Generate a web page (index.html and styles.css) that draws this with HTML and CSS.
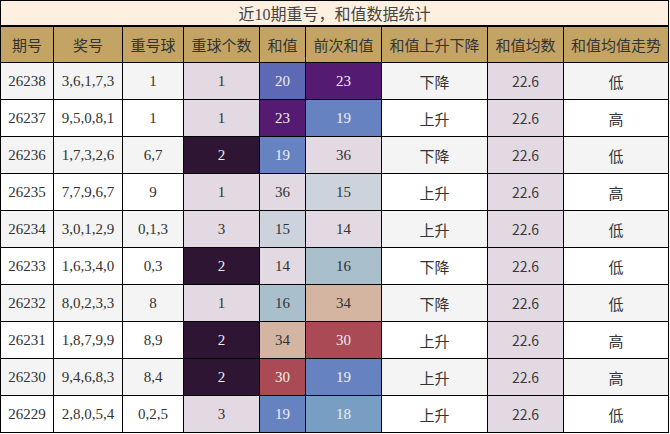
FILE: index.html
```html
<!DOCTYPE html>
<html lang="zh">
<head>
<meta charset="utf-8">
<title>近10期重号，和值数据统计</title>
<link rel="stylesheet" href="styles.css">
</head>
<body>
<table class="stats">
  <colgroup>
    <col class="c1"><col class="c2"><col class="c3"><col class="c4"><col class="c5">
    <col class="c6"><col class="c7"><col class="c8"><col class="c9">
  </colgroup>
  <thead>
    <tr class="title-row"><th colspan="9" class="title">近10期重号，和值数据统计</th></tr>
    <tr class="head-row">
      <th>期号</th><th>奖号</th><th>重号球</th><th>重球个数</th><th>和值</th>
      <th>前次和值</th><th>和值上升下降</th><th>和值均数</th><th>和值均值走势</th>
    </tr>
  </thead>
  <tbody>
    <tr class="alt"><td>26238</td><td>3,6,1,7,3</td><td>1</td><td class="cnt">1</td><td class="s20">20</td><td class="s23">23</td><td class="cn">下降</td><td class="avg cn">22.6</td><td class="cn">低</td></tr>
    <tr><td>26237</td><td>9,5,0,8,1</td><td>1</td><td class="cnt">1</td><td class="s23">23</td><td class="s19">19</td><td class="cn">上升</td><td class="avg cn">22.6</td><td class="cn">高</td></tr>
    <tr class="alt"><td>26236</td><td>1,7,3,2,6</td><td>6,7</td><td class="cnt2">2</td><td class="s19">19</td><td class="s36">36</td><td class="cn">下降</td><td class="avg cn">22.6</td><td class="cn">低</td></tr>
    <tr><td>26235</td><td>7,7,9,6,7</td><td>9</td><td class="cnt">1</td><td class="s36">36</td><td class="s15">15</td><td class="cn">上升</td><td class="avg cn">22.6</td><td class="cn">高</td></tr>
    <tr class="alt"><td>26234</td><td>3,0,1,2,9</td><td>0,1,3</td><td class="cnt">3</td><td class="s15">15</td><td class="s14">14</td><td class="cn">上升</td><td class="avg cn">22.6</td><td class="cn">低</td></tr>
    <tr><td>26233</td><td>1,6,3,4,0</td><td>0,3</td><td class="cnt2">2</td><td class="s14">14</td><td class="s16">16</td><td class="cn">下降</td><td class="avg cn">22.6</td><td class="cn">低</td></tr>
    <tr class="alt"><td>26232</td><td>8,0,2,3,3</td><td>8</td><td class="cnt">1</td><td class="s16">16</td><td class="s34">34</td><td class="cn">下降</td><td class="avg cn">22.6</td><td class="cn">低</td></tr>
    <tr><td>26231</td><td>1,8,7,9,9</td><td>8,9</td><td class="cnt2">2</td><td class="s34">34</td><td class="s30">30</td><td class="cn">上升</td><td class="avg cn">22.6</td><td class="cn">高</td></tr>
    <tr class="alt"><td>26230</td><td>9,4,6,8,3</td><td>8,4</td><td class="cnt2">2</td><td class="s30">30</td><td class="s19">19</td><td class="cn">上升</td><td class="avg cn">22.6</td><td class="cn">高</td></tr>
    <tr><td>26229</td><td>2,8,0,5,4</td><td>0,2,5</td><td class="cnt">3</td><td class="s19">19</td><td class="s18">18</td><td class="cn">上升</td><td class="avg cn">22.6</td><td class="cn">低</td></tr>
  </tbody>
</table>
</body>
</html>
```

FILE: styles.css
```css
html, body {
  margin: 0;
  padding: 0;
  background: #ffffff;
}

.stats {
  border-collapse: collapse;
  table-layout: fixed;
  width: 669px;
  font-family: "Liberation Serif", "Noto Sans CJK SC", serif;
  font-size: 15px;
  color: #333333;
}

.c1 { width: 53px; }
.c2 { width: 69px; }
.c3 { width: 61px; }
.c4 { width: 76px; }
.c5 { width: 46px; }
.c6 { width: 76px; }
.c7 { width: 106px; }
.c8 { width: 76px; }
.c9 { width: 105px; }

.stats th,
.stats td {
  border: 1px solid #000000;
  padding: 0;
  text-align: center;
  vertical-align: middle;
  font-weight: normal;
}

.title-row th.title {
  height: 24px;
  background: #fdf0e1;
  border-bottom: 2px solid #000000;
  font-family: "Liberation Serif", "Noto Sans CJK SC", serif;
  font-size: 16px;
  color: #444444;
}

.head-row th {
  height: 35px;
  background: #c4a464;
  font-family: "Noto Sans CJK SC", sans-serif;
  font-size: 15px;
  color: #333333;
}

.stats tbody td {
  height: 36px;
  background: #ffffff;
}

.stats tbody tr.alt td {
  background: #f4f4f4;
}

.stats tbody td.cn {
  font-family: "Noto Sans CJK SC", sans-serif;
}

.stats tbody td.avg {
  font-size: 14px;
  color: #3a3a3a;
}

.stats tbody td.avg,
.stats tbody tr.alt td.avg,
.stats tbody td.cnt,
.stats tbody tr.alt td.cnt {
  background: #e3d9e3;
}

.stats tbody td.cnt2,
.stats tbody tr.alt td.cnt2 {
  background: #2e1534;
  color: #eeeeee;
}

.stats tbody td.s20, .stats tbody tr.alt td.s20 { background: #5e69b5; color: #eeeeee; }
.stats tbody td.s23, .stats tbody tr.alt td.s23 { background: #551a72; color: #eeeeee; }
.stats tbody td.s19, .stats tbody tr.alt td.s19 { background: #6682c0; color: #eeeeee; }
.stats tbody td.s36, .stats tbody tr.alt td.s36 { background: #e3d9e3; color: #333333; }
.stats tbody td.s15, .stats tbody tr.alt td.s15 { background: #cdd3dc; color: #333333; }
.stats tbody td.s14, .stats tbody tr.alt td.s14 { background: #e3d9e3; color: #333333; }
.stats tbody td.s16, .stats tbody tr.alt td.s16 { background: #a9c0cc; color: #333333; }
.stats tbody td.s34, .stats tbody tr.alt td.s34 { background: #d3b5a2; color: #333333; }
.stats tbody td.s30, .stats tbody tr.alt td.s30 { background: #a94a54; color: #eeeeee; }
.stats tbody td.s18, .stats tbody tr.alt td.s18 { background: #789fc3; color: #eeeeee; }
```
